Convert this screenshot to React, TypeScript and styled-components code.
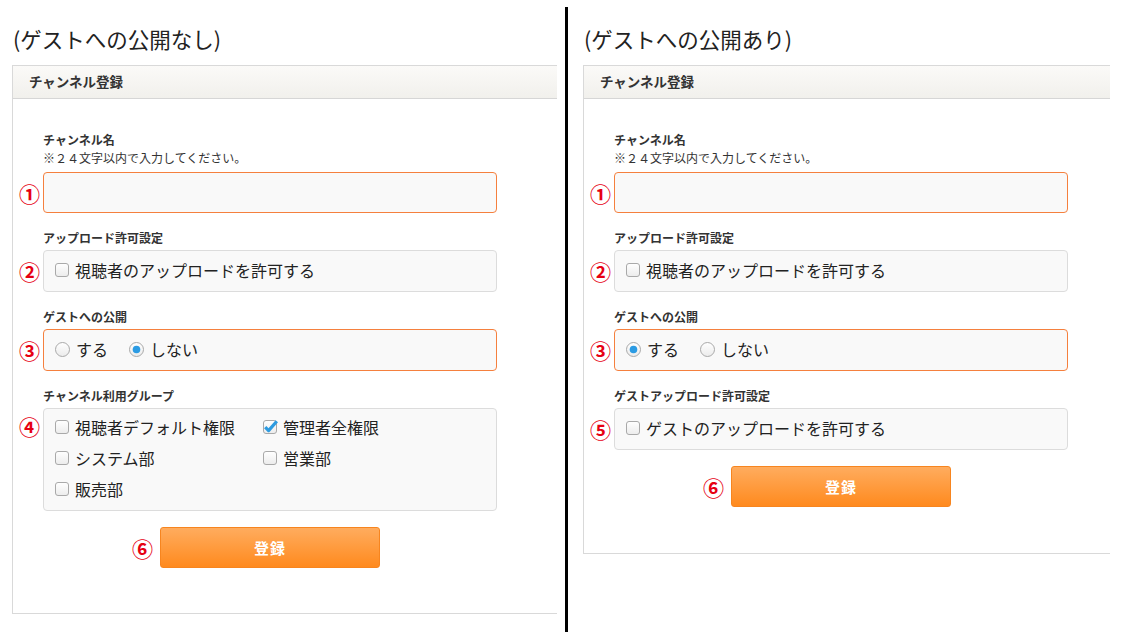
import React from "react";
import styled, { createGlobalStyle, css } from "styled-components";

const GlobalStyle = createGlobalStyle`
  html, body { margin: 0; padding: 0; background: #ffffff; }
  body {
    font-family: "Noto Sans CJK JP", "Noto Sans", sans-serif;
    color: #222;
    width: 1121px;
    height: 632px;
    overflow: hidden;
  }
  * { box-sizing: border-box; }
`;

const Page = styled.div`
  display: flex;
  align-items: flex-start;
  height: 632px;
`;

const Column = styled.section<{ $width: number; $padLeft?: number }>`
  flex: none;
  width: ${(p) => p.$width}px;
  padding-left: ${(p) => p.$padLeft ?? 0}px;
`;

const Divider = styled.div`
  flex: none;
  width: 3px;
  align-self: stretch;
  background: #000;
  margin: 7px 15px 0 8px;
`;

const Title = styled.h2`
  margin: 0 0 11px 0;
  padding-top: 24px;
  padding-left: 1px;
  font-size: 21.5px;
  line-height: 30px;
  font-weight: 400;
  color: #222;
`;

const Panel = styled.div`
  border: 1px solid #d9d9d9;
  border-right: none;
  background: #fff;
`;

const PanelHeader = styled.div`
  height: 33px;
  padding-left: 16px;
  padding-bottom: 2px;
  display: flex;
  align-items: center;
  font-size: 13.5px;
  font-weight: 700;
  color: #333;
  background: linear-gradient(to bottom, #fbfaf8, #f1f0ec);
  border-bottom: 1px solid #d6d6d6;
`;

const PanelBody = styled.div<{ $padBottom: number }>`
  padding: 32px 0 ${(p) => p.$padBottom}px 0;
`;

const Field = styled.div<{ $first?: boolean }>`
  display: grid;
  grid-template-columns: 30px 454px;
  margin-top: ${(p) => (p.$first ? 0 : 16)}px;
`;

const Label = styled.div`
  grid-column: 2;
  font-size: 12px;
  line-height: 18px;
  font-weight: 700;
  color: #333;
  margin-bottom: 3px;
`;

const Note = styled.div`
  grid-column: 2;
  font-size: 12px;
  line-height: 18px;
  color: #333;
  margin-top: -3px;
  margin-bottom: 5px;
`;

const Marker = styled.span<{ $top?: number }>`
  grid-column: 1;
  align-self: ${(p) => (p.$top !== undefined ? "start" : "center")};
  margin-top: ${(p) => p.$top ?? 0}px;
  justify-self: end;
  padding-right: 3px;
  font-size: 21px;
  line-height: 22px;
  font-weight: 700;
  color: #e60012;
`;

const boxBase = css<{ $tone: "orange" | "gray" }>`
  grid-column: 2;
  border: 1px solid ${(p) => (p.$tone === "orange" ? "#f5803e" : "#dcdcdc")};
  border-radius: 4px;
  background: #f9f9f9;
`;

const TextInput = styled.input<{ $tone: "orange" | "gray" }>`
  ${boxBase};
  height: 41px;
  width: 454px;
  font-size: 16px;
  padding: 0 10px;
  outline: none;
  font-family: inherit;
`;

const OptionBox = styled.div<{ $tone: "orange" | "gray" }>`
  ${boxBase};
  display: flex;
  align-items: center;
  height: 42px;
  padding: 0 11px 2px 11px;
`;

const GroupBox = styled.div<{ $tone: "orange" | "gray" }>`
  ${boxBase};
  display: grid;
  grid-template-columns: 208px 208px;
  grid-auto-rows: 31px;
  padding: 2px 11px 6px 11px;
`;

const Option = styled.label<{ $spaced?: boolean }>`
  display: flex;
  align-items: center;
  gap: 6px;
  font-size: 16px;
  color: #222;
  margin-right: ${(p) => (p.$spaced ? 21 : 0)}px;
  white-space: nowrap;
`;

const ButtonRow = styled.div`
  grid-column: 2;
  display: grid;
  grid-template-columns: 1fr 220px 1fr;
  align-items: center;
`;

const ButtonMarker = styled(Marker)`
  grid-column: 1;
  justify-self: end;
  padding-right: 0;
  margin-right: 7px;
`;

const SubmitButton = styled.button`
  grid-column: 2;
  height: 41px;
  width: 220px;
  border: 1px solid #f7851f;
  border-radius: 3px;
  background: linear-gradient(to bottom, #ffac5e, #ff8a1e);
  color: #fff;
  font-family: inherit;
  font-size: 15px;
  font-weight: 700;
  letter-spacing: 1px;
  padding-bottom: 2px;
  cursor: pointer;
`;

const CheckboxIcon = ({ checked }: { checked?: boolean }) => (
  <svg width="14" height="14" viewBox="0 0 14 14" style={{ overflow: "visible", flex: "none" }}>
    <defs>
      <linearGradient id="cbg" x1="0" y1="0" x2="0" y2="1">
        <stop offset="0" stopColor="#ffffff" />
        <stop offset="1" stopColor="#ececec" />
      </linearGradient>
    </defs>
    <rect x="0.5" y="0.5" width="13" height="13" rx="2.5" fill="url(#cbg)" stroke="#a9a9a9" />
    {checked && (
      <path d="M2.2 7.2 L5.6 10.6 L13.8 1.2" fill="none" stroke="#2d9be0" strokeWidth="3.2" strokeLinejoin="round" />
    )}
  </svg>
);

const RadioIcon = ({ checked }: { checked?: boolean }) => (
  <svg width="15" height="15" viewBox="0 0 15 15" style={{ flex: "none" }}>
    <defs>
      <linearGradient id="rbg" x1="0" y1="0" x2="0" y2="1">
        <stop offset="0" stopColor="#ffffff" />
        <stop offset="1" stopColor="#ebebeb" />
      </linearGradient>
    </defs>
    <circle cx="7.5" cy="7.5" r="7" fill="url(#rbg)" stroke="#a9a9a9" />
    {checked && <circle cx="7.5" cy="7.5" r="3.8" fill="#2b9be3" />}
  </svg>
);

const Check = ({ label, checked }: { label: string; checked?: boolean }) => (
  <Option>
    <CheckboxIcon checked={checked} />
    {label}
  </Option>
);

const Radio = ({ label, checked, spaced }: { label: string; checked?: boolean; spaced?: boolean }) => (
  <Option $spaced={spaced}>
    <RadioIcon checked={checked} />
    {label}
  </Option>
);

const CommonTop = () => (
  <>
    <Field $first>
      <Label>チャンネル名</Label>
      <Note>※２４文字以内で入力してください。</Note>
      <Marker>①</Marker>
      <TextInput $tone="orange" type="text" />
    </Field>
    <Field>
      <Label>アップロード許可設定</Label>
      <Marker>②</Marker>
      <OptionBox $tone="gray">
        <Check label="視聴者のアップロードを許可する" />
      </OptionBox>
    </Field>
  </>
);

const FormPanel = ({ guest }: { guest: boolean }) => (
  <Panel>
    <PanelHeader>チャンネル登録</PanelHeader>
    <PanelBody $padBottom={guest ? 46 : 45}>
      <CommonTop />
      <Field>
        <Label>ゲストへの公開</Label>
        <Marker>③</Marker>
        <OptionBox $tone="orange">
          <Radio label="する" checked={guest} spaced />
          <Radio label="しない" checked={!guest} />
        </OptionBox>
      </Field>
      {guest ? (
        <Field>
          <Label>ゲストアップロード許可設定</Label>
          <Marker>⑤</Marker>
          <OptionBox $tone="gray">
            <Check label="ゲストのアップロードを許可する" />
          </OptionBox>
        </Field>
      ) : (
        <Field>
          <Label>チャンネル利用グループ</Label>
          <Marker $top={7}>④</Marker>
          <GroupBox $tone="gray">
            <Check label="視聴者デフォルト権限" />
            <Check label="管理者全権限" checked />
            <Check label="システム部" />
            <Check label="営業部" />
            <Check label="販売部" />
          </GroupBox>
        </Field>
      )}
      <Field>
        <ButtonRow>
          <ButtonMarker>⑥</ButtonMarker>
          <SubmitButton type="button">登録</SubmitButton>
        </ButtonRow>
      </Field>
    </PanelBody>
  </Panel>
);

export default function App() {
  return (
    <>
      <GlobalStyle />
      <Page>
        <Column $width={557} $padLeft={12}>
          <Title>(ゲストへの公開なし)</Title>
          <FormPanel guest={false} />
        </Column>
        <Divider />
        <Column $width={527}>
          <Title>(ゲストへの公開あり)</Title>
          <FormPanel guest />
        </Column>
      </Page>
    </>
  );
}
